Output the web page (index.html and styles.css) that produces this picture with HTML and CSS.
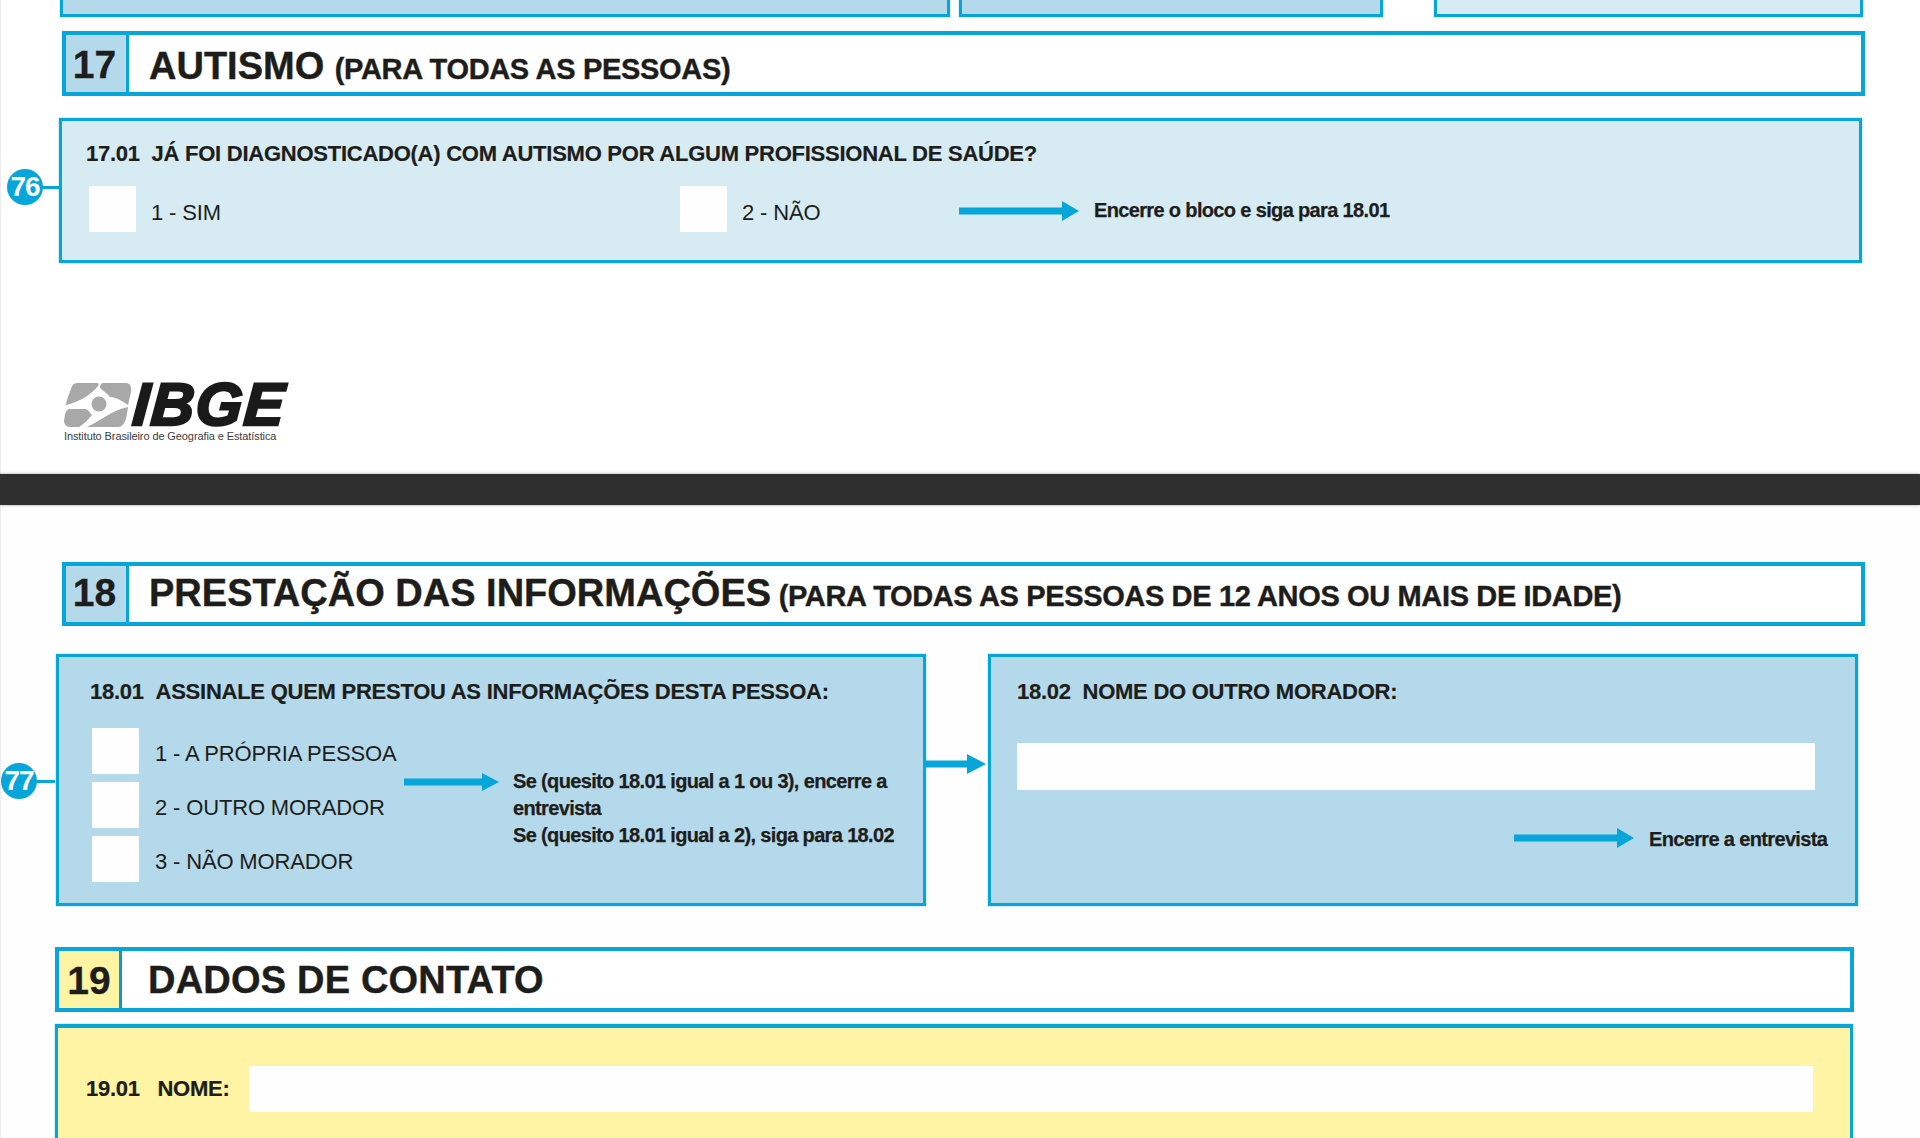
FILE: index.html
```html
<!DOCTYPE html>
<html lang="pt-BR">
<head>
<meta charset="utf-8">
<title>Questionário IBGE</title>
<link rel="stylesheet" href="styles.css">
</head>
<body>
<div class="page">
  <div class="upper">
    <div class="prev-row">
      <div class="prev prev-a"></div>
      <div class="prev prev-b"></div>
      <div class="prev prev-c"></div>
    </div>

    <header class="sec sec-17">
      <div class="num">17</div>
      <h2 class="sec-title">AUTISMO <small>(PARA TODAS AS PESSOAS)</small></h2>
    </header>

    <section class="panel panel-17">
      <span class="badge badge-76">76</span>
      <p class="q q-17">17.01&nbsp;&nbsp;JÁ FOI DIAGNOSTICADO(A) COM AUTISMO POR ALGUM PROFISSIONAL DE SAÚDE?</p>
      <div class="opts-17">
        <div class="opt opt-1"><i class="box"></i><span class="lbl">1 - SIM</span></div>
        <div class="opt opt-2"><i class="box"></i><span class="lbl">2 - NÃO</span></div>
        <svg class="arrow arrow-17" viewBox="0 0 120 20"><path d="M0 6.500H103V0L120 10 103 20V13.500H0Z"/></svg>
        <span class="note note-17">Encerre o bloco e siga para 18.01</span>
      </div>
    </section>

    <div class="logo">
      <div class="logo-mark">
        <svg class="logo-icon" viewBox="0 0 68 44">
          <path d="M13 0H33C35 0 35 2 34 3C27 12 15 19 2 22C2 19 5 11 7 6C8 2 10 0 13 0Z"/>
          <path d="M40 0H62C66 0 68 4 67 9L64 22C58 18 52 14 46 14C43 10 39 8 36 5C36 2 37 0 40 0Z"/>
          <circle cx="35" cy="21" r="7.500"/>
          <path d="M6 26H21C24 26 26 30 28 32C24 37 20 41 15 44H6C2 44 0 41 0 37L1 32C2 28 3 26 6 26Z"/>
          <path d="M64 24C63 31 62 44 54 44H23C35 39 46 28 64 24Z"/>
        </svg>
        <span class="logo-word">IBGE</span>
      </div>
      <div class="logo-sub">Instituto Brasileiro de Geografia e Estatística</div>
    </div>
  </div>

  <div class="bar"></div>

  <div class="lower">
    <header class="sec sec-18">
      <div class="num">18</div>
      <h2 class="sec-title">PRESTAÇÃO DAS INFORMAÇÕES <small>(PARA TODAS AS PESSOAS DE 12 ANOS OU MAIS DE IDADE)</small></h2>
    </header>

    <div class="row-18">
      <section class="panel panel-1801">
        <span class="badge badge-77">77</span>
        <p class="q">18.01&nbsp;&nbsp;ASSINALE QUEM PRESTOU AS INFORMAÇÕES DESTA PESSOA:</p>
        <div class="body-1801">
          <div class="opts-1801">
            <div class="opt"><i class="box"></i><span class="lbl">1 - A PRÓPRIA PESSOA</span></div>
            <div class="opt"><i class="box"></i><span class="lbl">2 - OUTRO MORADOR</span></div>
            <div class="opt"><i class="box"></i><span class="lbl">3 - NÃO MORADOR</span></div>
          </div>
          <svg class="arrow arrow-1801" viewBox="0 0 95 18"><path d="M0 5.500H78V0L95 9 78 18V12.500H0Z"/></svg>
          <p class="note note-1801">Se (quesito 18.01 igual a 1 ou 3), encerre a entrevista<br>Se (quesito 18.01 igual a 2), siga para 18.02</p>
        </div>
        <svg class="arrow arrow-link" viewBox="0 0 60 20"><path d="M0 6.500H41V0L60 10 41 20V13.500H0Z"/></svg>
      </section>

      <section class="panel panel-1802">
        <p class="q">18.02&nbsp;&nbsp;NOME DO OUTRO MORADOR:</p>
        <div class="field field-1802"></div>
        <div class="end-1802">
          <svg class="arrow arrow-1802" viewBox="0 0 120 20"><path d="M0 6.500H103V0L120 10 103 20V13.500H0Z"/></svg>
          <span class="note">Encerre a entrevista</span>
        </div>
      </section>
    </div>

    <header class="sec sec-19">
      <div class="num">19</div>
      <h2 class="sec-title">DADOS DE CONTATO</h2>
    </header>

    <section class="panel panel-19">
      <div class="row-19">
        <span class="q q-19">19.01&nbsp;&nbsp;&nbsp;NOME:</span>
        <div class="field field-19"></div>
      </div>
    </section>
  </div>
</div>
</body>
</html>
```

FILE: styles.css
```css
* { box-sizing: border-box; }
html, body { margin: 0; padding: 0; }
body {
  width: 1920px;
  height: 1138px;
  overflow: hidden;
  background: #fff;
  color: #1d1d1b;
  font-family: "Liberation Sans", Arial, sans-serif;
}
.page { width: 1920px; height: 1138px; overflow: hidden; }
.upper, .lower { border-left: 1px solid #ececec; }
.upper { height: 474px; }
.bar { height: 31px; background: #2f2f2f; box-shadow: 0 0 3px rgba(0,0,0,.35); position: relative; }
.lower { height: 633px; background: #fefefe; padding-top: 57px; }
p { margin: 0; }
h2 { margin: 0; font-weight: 700; }

.prev-row { display: flex; height: 17px; margin-bottom: 14px; }
.prev { height: 17px; border: 3px solid #07a6da; border-top: 0; box-shadow: 0 0 1px #07a6da; }
.prev-a { width: 890px; margin-left: 59px; background: #b4d9ea; }
.prev-b { width: 424px; margin-left: 9px; background: #b4d9ea; }
.prev-c { width: 429px; margin-left: 51px; background: #d7ebf3; }

.sec { display: flex; align-items: stretch; background: #fff; border: 4px solid #07a6da; }
.sec-17 { width: 1803px; height: 65px; margin-left: 61px; }
.sec-18 { width: 1803px; height: 64px; margin-left: 61px; }
.sec-19 { width: 1799px; height: 65px; margin-left: 54px; }
.num {
  width: 63px;
  flex: none;
  display: flex;
  align-items: center;
  justify-content: center;
  padding-right: 3px;
  font-size: 39px;
  font-weight: 700;
  -webkit-text-stroke: .3px #1d1d1b;
  background: #b4d9ea;
  border-right: 3px solid #07a6da;
}
.sec-17 .num { padding-top: 2px; }
.sec-18 .num { padding-bottom: 2px; }
.sec-19 .num { padding: 2px 0 0 0; background: #fff4a3; border-right-color: #0a9ac8; }
.sec-title {
  margin-left: 20px;
  font-size: 38px;
  line-height: 56px;
  -webkit-text-stroke: .4px #1d1d1b;
  white-space: nowrap;
}
.sec-17 .sec-title { padding-top: 3px; }
.sec-18 .sec-title { margin-top: -1px; }
.sec-19 .sec-title { margin-left: 26px; letter-spacing: .2px; padding-top: 1px; }
.sec-title small { font-size: 29px; letter-spacing: -.32px; }
.sec-18 .sec-title small { margin-left: -3px; letter-spacing: -.36px; }

.panel { position: relative; border: 3px solid #07a6da; box-shadow: 0 0 1px #07a6da; }
.panel-17 { width: 1803px; height: 145px; margin: 22px 0 0 58px; background: #d7ebf3; padding: 20px 0 0 24px; }
.q { font-size: 22px; font-weight: 700; line-height: 26px; letter-spacing: -.25px; white-space: nowrap; -webkit-text-stroke: .2px #1d1d1b; }
.opts-17 { display: flex; align-items: center; margin-top: 19px; height: 46px; }
.opt { display: flex; align-items: center; }
.opt-1 { width: 591px; }
.opt-2 { width: 282px; }
.box { display: block; width: 47px; height: 46px; background: #fefefe; flex: none; }
.lbl { font-size: 22px; letter-spacing: -.15px; margin-left: 15px; padding-top: 7px; white-space: nowrap; }
.opts-17 .box { margin-left: 3px; }
.arrow { display: block; fill: #07a6da; flex: none; }
.arrow-17 { width: 120px; height: 20px; margin-top: 3px; }
.note { font-size: 20px; font-weight: 700; line-height: 27px; letter-spacing: -.65px; -webkit-text-stroke: .25px #1d1d1b; }
.note-17 { margin: 2px 0 0 15px; white-space: nowrap; }

.logo { margin: 119px 0 0 63px; width: 240px; }
.logo-mark { display: flex; height: 45px; align-items: center; }
.logo-icon { width: 68px; height: 44px; fill: #a8a8a8; flex: none; }
.logo-word {
  margin-left: 1px;
  font-size: 60px;
  line-height: 45px;
  font-weight: 700;
  font-style: italic;
  color: #1a1a1a;
  -webkit-text-stroke: 2.500px #1a1a1a;
  letter-spacing: 1.500px;
  transform: skewX(-4deg);
}
.logo-sub { font-size: 11px; line-height: 14px; margin-top: 2px; letter-spacing: -.1px; color: #3c3c3c; white-space: nowrap; }

.row-18 { display: flex; margin: 28px 0 0 55px; }
.panel-1801, .panel-1802 { height: 252px; background: #b4d9ea; width: 870px; padding: 22px 0 0 31px; }
.panel-1802 { margin-left: 62px; padding-left: 26px; }
.body-1801 { display: flex; margin-top: 23px; }
.opts-1801 { display: flex; flex-direction: column; gap: 8px; width: 312px; margin-left: 2px; flex: none; }
.opts-1801 .lbl { margin-left: 16px; padding-top: 5px; }
.arrow-1801 { width: 95px; height: 18px; margin-top: 45px; }
.note-1801 { width: 385px; margin: 40px 0 0 14px; }
.arrow-link { position: absolute; left: 867px; top: 97px; width: 60px; height: 20px; }
.field { background: #fefefe; height: 47px; }
.field-1802 { width: 798px; margin-top: 38px; }
.end-1802 { display: flex; align-items: center; margin: 33px 0 0 497px; white-space: nowrap; }
.arrow-1802 { width: 120px; height: 20px; }
.end-1802 .note { margin-left: 15px; padding-top: 3px; }

.sec-19 { margin-top: 41px; }
.panel-19 { width: 1798px; height: 160px; margin: 12px 0 0 54px; background: #fff4a3; border-width: 4px 3px 3px; padding: 38px 0 0 28px; }
.row-19 { display: flex; align-items: center; }
.q-19 { width: 163px; }
.field-19 { width: 1564px; height: 46px; }

.badge {
  position: absolute;
  width: 36px;
  height: 36px;
  border-radius: 50%;
  background: #07a6da;
  color: #fff;
  font-size: 28px;
  font-weight: 700;
  line-height: 36px;
  text-align: center;
  letter-spacing: -1px;
}
.badge::after { content: ""; position: absolute; left: 34px; top: 17px; width: 20px; height: 3px; background: #07a6da; }
.badge-76 { left: -55px; top: 48px; }
.badge-77 { left: -58px; top: 106px; }
```
